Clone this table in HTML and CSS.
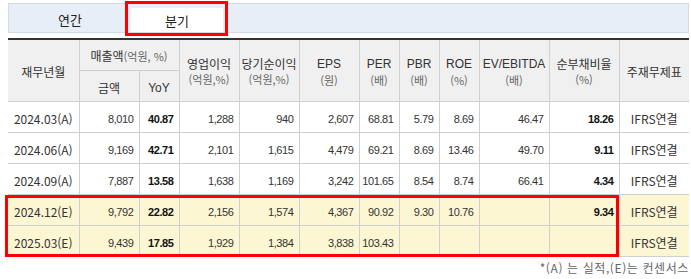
FILE: index.html
```html
<!DOCTYPE html>
<html lang="ko">
<head>
<meta charset="utf-8">
<link rel="stylesheet" href="styles.css">
</head>
<body>
<div class="page">
  <div class="tabs">
    <div class="tab">연간</div>
    <div class="tab active">분기</div>
    <div class="tab-hl"></div>
  </div>
  <div class="tbl-wrap">
    <table class="fin">
      <colgroup>
        <col style="width:71px"><col style="width:60px"><col style="width:40px"><col style="width:60px"><col style="width:60px"><col style="width:60px"><col style="width:40px"><col style="width:40px"><col style="width:40px"><col style="width:70px"><col style="width:70px"><col style="width:70px">
      </colgroup>
      <thead>
        <tr class="h1">
          <th rowspan="2" class="first">재무년월</th>
          <th colspan="2">매출액<span class="sub">(억원, %)</span></th>
          <th rowspan="2">영업이익<br><span class="sub">(억원,%)</span></th>
          <th rowspan="2">당기순이익<br><span class="sub">(억원,%)</span></th>
          <th rowspan="2"><span class="en">EPS</span><br><span class="sub">(원)</span></th>
          <th rowspan="2"><span class="en">PER</span><br><span class="sub">(배)</span></th>
          <th rowspan="2"><span class="en">PBR</span><br><span class="sub">(배)</span></th>
          <th rowspan="2"><span class="en">ROE</span><br><span class="sub">(%)</span></th>
          <th rowspan="2"><span class="en">EV/EBITDA</span><br><span class="sub">(배)</span></th>
          <th rowspan="2">순부채비율<br><span class="sub">(%)</span></th>
          <th rowspan="2" class="last">주재무제표</th>
        </tr>
        <tr class="h2">
          <th>금액</th>
          <th><span class="en">YoY</span></th>
        </tr>
      </thead>
      <tbody>
        <tr>
          <td class="date first">2024.03(A)</td><td class="num">8,010</td><td class="num b">40.87</td><td class="num">1,288</td><td class="num">940</td><td class="num">2,607</td><td class="num">68.81</td><td class="num">5.79</td><td class="num">8.69</td><td class="num">46.47</td><td class="num b">18.26</td><td class="std last">IFRS연결</td>
        </tr>
        <tr>
          <td class="date first">2024.06(A)</td><td class="num">9,169</td><td class="num b">42.71</td><td class="num">2,101</td><td class="num">1,615</td><td class="num">4,479</td><td class="num">69.21</td><td class="num">8.69</td><td class="num">13.46</td><td class="num">49.70</td><td class="num b">9.11</td><td class="std last">IFRS연결</td>
        </tr>
        <tr>
          <td class="date first">2024.09(A)</td><td class="num">7,887</td><td class="num b">13.58</td><td class="num">1,638</td><td class="num">1,169</td><td class="num">3,242</td><td class="num">101.65</td><td class="num">8.54</td><td class="num">8.74</td><td class="num">66.41</td><td class="num b">4.34</td><td class="std last">IFRS연결</td>
        </tr>
        <tr class="est">
          <td class="date first">2024.12(E)</td><td class="num">9,792</td><td class="num b">22.82</td><td class="num">2,156</td><td class="num">1,574</td><td class="num">4,367</td><td class="num">90.92</td><td class="num">9.30</td><td class="num">10.76</td><td class="num"></td><td class="num b">9.34</td><td class="std last">IFRS연결</td>
        </tr>
        <tr class="est">
          <td class="date first">2025.03(E)</td><td class="num">9,439</td><td class="num b">17.85</td><td class="num">1,929</td><td class="num">1,384</td><td class="num">3,838</td><td class="num">103.43</td><td class="num"></td><td class="num"></td><td class="num"></td><td class="num b"></td><td class="std last">IFRS연결</td>
        </tr>
      </tbody>
    </table>
    <div class="est-hl"></div>
  </div>
  <p class="note">*(A) 는 실적,(E)는 컨센서스</p>
</div>
</body>
</html>
```

FILE: styles.css
```css
html, body {
  margin: 0;
  padding: 0;
  background: #fff;
  overflow: hidden;
}

.page {
  padding: 3px 2px 0 8px;
  font-family: "Noto Sans CJK KR", "Noto Sans", sans-serif;
  color: #333;
}

.tabs {
  position: relative;
  display: flex;
  height: 28px;
  border: 1px solid #d3dbe7;
  background: #e8eef8;
}

.tab {
  width: 122px;
  display: flex;
  align-items: center;
  justify-content: center;
  padding-top: 3px;
  box-sizing: border-box;
  font-size: 13px;
  color: #222;
}

.tab.active {
  width: 92px;
  margin-top: 4px;
  padding-top: 0;
  background: #fff;
}

.tab-hl {
  position: absolute;
  left: 116px;
  top: -3px;
  width: 103px;
  height: 35px;
  border: 3px solid #f00;
  box-sizing: border-box;
}

.tbl-wrap {
  position: relative;
  margin-top: 5px;
}

.fin {
  width: 681px;
  table-layout: fixed;
  border-collapse: collapse;
  border-top: 2px solid #333;
}

.fin th, .fin td {
  border: 1px solid #cfcfcf;
  padding: 0;
}

.fin th {
  background: #f0f0f0;
  font-weight: normal;
  font-size: 12px;
  line-height: 15px;
  color: #333;
  text-align: center;
  vertical-align: middle;
  padding-top: 2px;
}

.fin .h1 th {
  height: 28px;
}

.fin .h2 th {
  height: 28px;
}

.fin .first {
  border-left: 0;
}

.fin .last {
  border-right: 0;
}

.sub {
  font-size: 11px;
  color: #666;
}

.en {
  font-family: "Liberation Sans", sans-serif;
  font-size: 12px;
}

.fin td {
  height: 27px;
  padding-top: 3px;
  font-size: 11px;
  color: #333;
  vertical-align: middle;
}

.fin td.num {
  text-align: right;
  padding-right: 5px;
  font-family: "Liberation Sans", sans-serif;
  letter-spacing: -0.4px;
}

.fin td.b {
  font-weight: bold;
  color: #111;
}

.fin td.date, .fin td.std {
  text-align: center;
  font-size: 12px;
}

.fin tr.est td {
  background: #fcf6d3;
}

.est-hl {
  position: absolute;
  left: -3px;
  top: 157px;
  width: 614px;
  height: 62px;
  border: 3px solid #f00;
  box-sizing: border-box;
}

.note {
  margin: 4px 0 0 0;
  text-align: right;
  font-size: 12px;
  line-height: 14px;
  letter-spacing: 0.6px;
  color: #666;
  white-space: nowrap;
}
```
